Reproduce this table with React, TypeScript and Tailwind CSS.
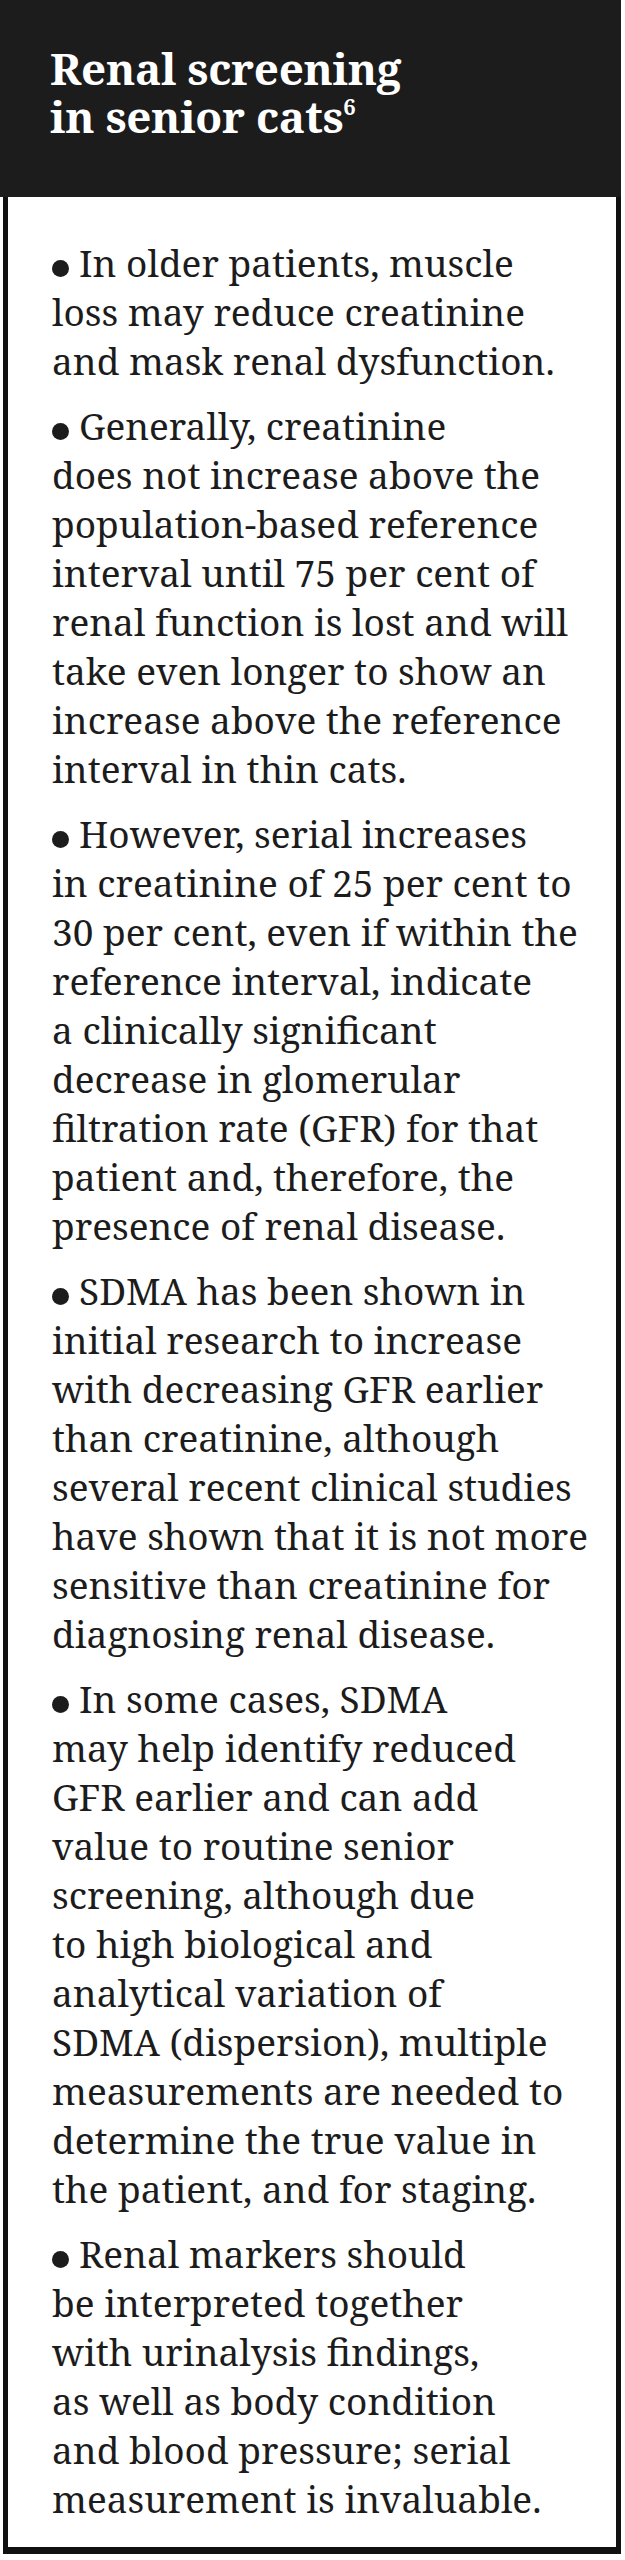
import React from "react";

const paragraphs: string[][] = [
  [
    "In older patients, muscle",
    "loss may reduce creatinine",
    "and mask renal dysfunction.",
  ],
  [
    "Generally, creatinine",
    "does not increase above the",
    "population-based reference",
    "interval until 75 per cent of",
    "renal function is lost and will",
    "take even longer to show an",
    "increase above the reference",
    "interval in thin cats.",
  ],
  [
    "However, serial increases",
    "in creatinine of 25 per cent to",
    "30 per cent, even if within the",
    "reference interval, indicate",
    "a clinically significant",
    "decrease in glomerular",
    "filtration rate (GFR) for that",
    "patient and, therefore, the",
    "presence of renal disease.",
  ],
  [
    "SDMA has been shown in",
    "initial research to increase",
    "with decreasing GFR earlier",
    "than creatinine, although",
    "several recent clinical studies",
    "have shown that it is not more",
    "sensitive than creatinine for",
    "diagnosing renal disease.",
  ],
  [
    "In some cases, SDMA",
    "may help identify reduced",
    "GFR earlier and can add",
    "value to routine senior",
    "screening, although due",
    "to high biological and",
    "analytical variation of",
    "SDMA (dispersion), multiple",
    "measurements are needed to",
    "determine the true value in",
    "the patient, and for staging.",
  ],
  [
    "Renal markers should",
    "be interpreted together",
    "with urinalysis findings,",
    "as well as body condition",
    "and blood pressure; serial",
    "measurement is invaluable.",
  ],
];

export default function App() {
  return (
    <div className="w-[621px] bg-white font-['Noto_Serif',serif]">
      <div className="bg-[#1c1c1c] pl-[50px] pt-[44px] pb-[57px] text-white">
        <h2 className="whitespace-nowrap text-[44px] font-bold leading-[48px] tracking-[-0.3px]">
          Renal screening
          <br />
          in senior cats
          <sup className="relative -top-[2px] align-super text-[22px] font-bold leading-none">6</sup>
        </h2>
      </div>
      <div className="ml-[3px] border-x-[5px] border-b-[7px] border-[#111] bg-white pl-[44px] pt-[41px] pb-[24px] text-[#1c1c1c]">
        <div className="flex flex-col gap-4">
          {paragraphs.map((lines, i) => (
            <p key={i} className="whitespace-nowrap text-[37px] leading-[49px]">
              {lines.map((line, j) => (
                <React.Fragment key={j}>
                  {j === 0 && (
                    <span className="mr-[10px] inline-block h-[17px] w-[17px] rounded-full bg-[#1c1c1c]" />
                  )}
                  {line}
                  {j < lines.length - 1 && <br />}
                </React.Fragment>
              ))}
            </p>
          ))}
        </div>
      </div>
    </div>
  );
}
